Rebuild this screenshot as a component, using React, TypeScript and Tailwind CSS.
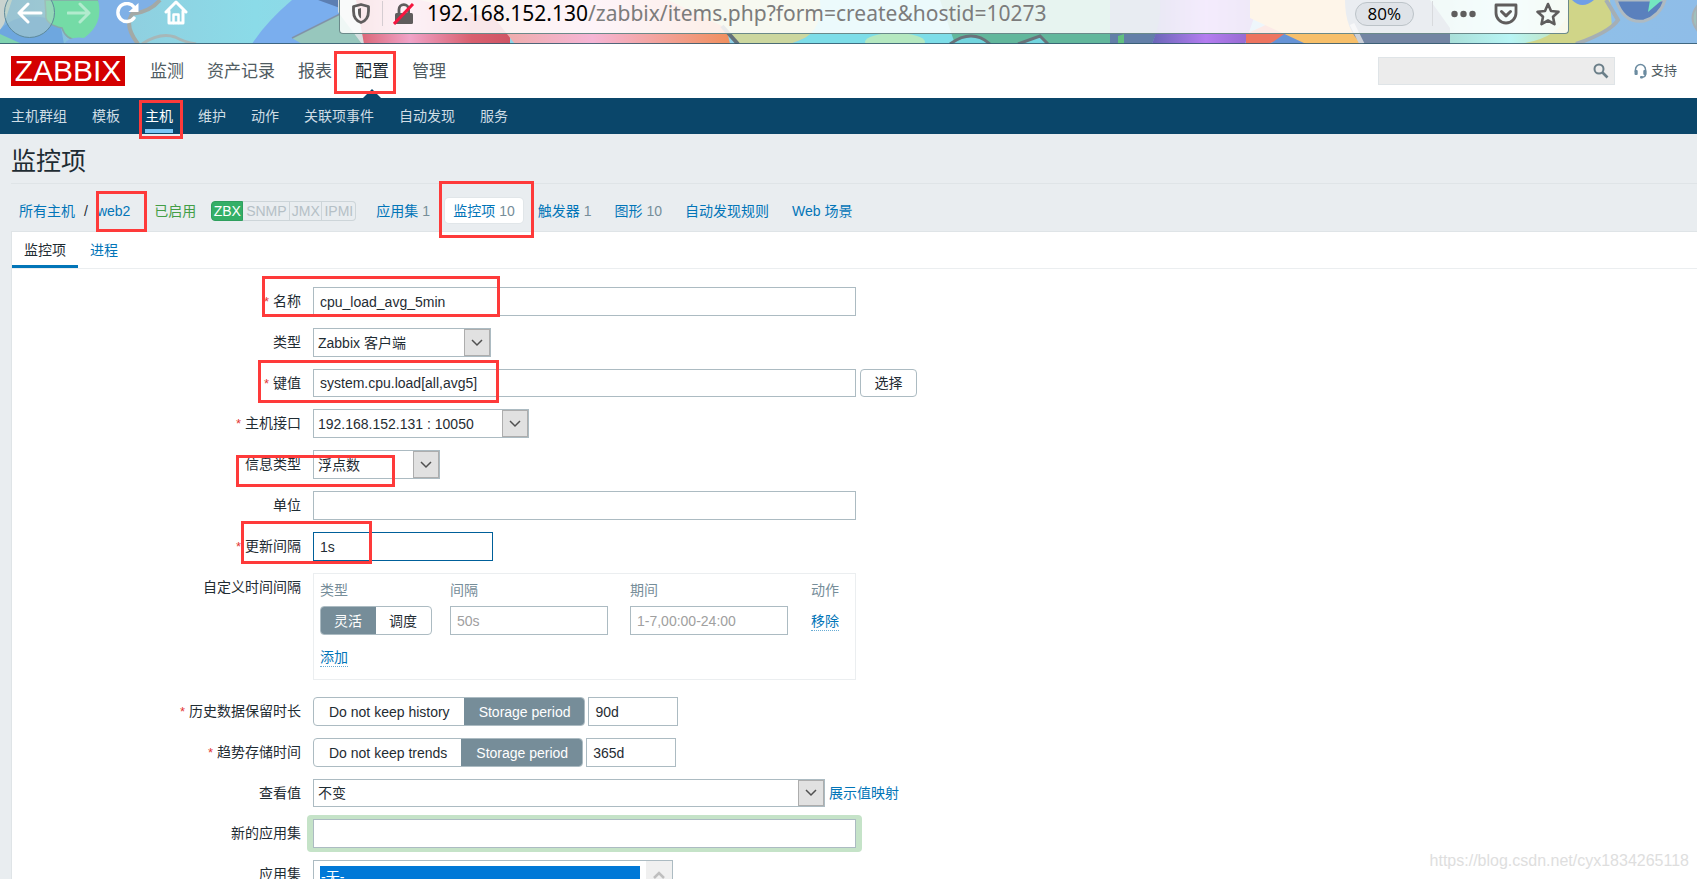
import type { ReactNode } from 'react';
import clsx from 'clsx';

const mainMenu = ['监测', '资产记录', '报表', '配置', '管理'];
const subMenu = ['主机群组', '模板', '主机', '维护', '动作', '关联项事件', '自动发现', '服务'];

const hostTabs = [
  { label: '应用集', count: 1 },
  { label: '监控项', count: 10, selected: true },
  { label: '触发器', count: 1 },
  { label: '图形', count: 10 },
  { label: '自动发现规则' },
  { label: 'Web 场景' },
];

// Red frames drawn over the page to point out the fields to fill in
const highlights = [
  'left-[334px] top-[51px] w-[62px] h-[43px]',
  'left-[139px] top-[100px] w-[44px] h-[39px]',
  'left-[96px] top-[191px] w-[51px] h-[41px]',
  'left-[439px] top-[181px] w-[95px] h-[57px]',
  'left-[262px] top-[276px] w-[238px] h-[41px]',
  'left-[258px] top-[360px] w-[241px] h-[43px]',
  'left-[236px] top-[455px] w-[159px] h-[32px]',
  'left-[241px] top-[521px] w-[131px] h-[43px]',
];

const inputClass =
  'block border border-[#acbbc2] bg-white px-1.5 text-sm text-[#1f2c33] outline-none placeholder:text-[#a0a0a0]';

const ToolbarArt = () => (
  <svg
    className="absolute inset-0 h-full w-full"
    viewBox="0 0 1697 44"
    preserveAspectRatio="none"
    aria-hidden="true"
  >
    <defs>
      <linearGradient id="sky" x1="0" x2="1">
        <stop offset="0" stopColor="#7fb2dd" />
        <stop offset="0.08" stopColor="#8fd0e0" />
        <stop offset="0.15" stopColor="#8bdbe8" />
        <stop offset="0.2" stopColor="#8fd8e6" />
        <stop offset="1" stopColor="#8fbde8" />
      </linearGradient>
      <linearGradient id="rose" x1="0" x2="1">
        <stop offset="0" stopColor="#d9606f" />
        <stop offset="0.35" stopColor="#f0a3c8" />
        <stop offset="0.75" stopColor="#d9606f" />
        <stop offset="1" stopColor="#d05565" />
      </linearGradient>
      <linearGradient id="peach" x1="0" x2="1">
        <stop offset="0" stopColor="#ecaaa0" />
        <stop offset="0.45" stopColor="#f5b5d5" />
        <stop offset="1" stopColor="#f08f5e" />
      </linearGradient>
      <linearGradient id="violet" x1="0" x2="1">
        <stop offset="0" stopColor="#6a66b8" />
        <stop offset="0.5" stopColor="#b47cf0" />
        <stop offset="1" stopColor="#8e66c8" />
      </linearGradient>
      <linearGradient id="aqua" x1="0" x2="1">
        <stop offset="0" stopColor="#a5d8cf" />
        <stop offset="0.5" stopColor="#b8f5f5" />
        <stop offset="1" stopColor="#c5d8a0" />
      </linearGradient>
    </defs>
    <rect width="1697" height="44" fill="url(#sky)" />
    <path d="M0 0H12L4 24L0 30Z" fill="#c9d3cf" />
    <path d="M0 30Q20 8 60 22L64 44H0Z" fill="#6ea7df" />
    <path d="M0 34L22 44H0Z" fill="#7fd3b0" />
    <path d="M45 0H98Q108 10 102 24Q92 40 78 40Q66 40 62 28Q44 24 46 14Z" fill="#74dba6" stroke="#86a8a8" strokeWidth="1.5" />
    <path d="M98 0H160Q150 12 132 14Q124 26 138 44H64Q70 36 84 38Q104 24 98 0Z" fill="#7fb0e6" />
    <path d="M160 0Q150 12 132 14Q124 26 138 44" fill="none" stroke="#a3a9a6" strokeWidth="4" />
    <path d="M142 44Q160 32 175 37Q184 42 196 44" fill="none" stroke="#a7b7b8" strokeWidth="3" />
    <path d="M292 0H345V44H252Q266 22 292 0Z" fill="#7aaeee" />
    <path d="M340 14L292 38L302 44H372L345 8Z" fill="#97c7bd" />
    <path d="M340 14L292 38" stroke="#8293a8" strokeWidth="1.5" />
    <path d="M318 0H340V8Z" fill="#5c7fb2" />
    <path d="M338 0H420L376 44L362 44L338 12Z" fill="#d6dfe0" />
    <path d="M356 0H510V44H364Z" fill="url(#rose)" />
    <path d="M420 0H550L525 44L500 20Z" fill="#eecab4" />
    <path d="M480 0H720L730 44H515Z" fill="url(#peach)" />
    <path d="M668 0H820Q826 20 815 34L790 44H738L722 26Z" fill="#ccd79f" />
    <path d="M722 26L738 44" stroke="#64717a" strokeWidth="4" />
    <path d="M820 0H960V44H790Q824 36 820 0Z" fill="#7ddde8" />
    <ellipse cx="895" cy="42" rx="30" ry="9" fill="#b5e8c0" />
    <path d="M940 0H1120V44H955Z" fill="#62b79c" />
    <path d="M950 44Q972 28 990 44M1018 44L1040 36L1048 44" fill="#72d5de" stroke="#68737a" strokeWidth="3" />
    <path d="M1110 0H1170L1152 44H1110Z" fill="#637fa8" />
    <path d="M1118 36L1124 34V44H1118Z" fill="#62c080" />
    <path d="M1160 0H1260L1245 44H1152Q1162 20 1160 0Z" fill="url(#violet)" />
    <path d="M1246 34L1272 22L1290 36L1268 44H1246Z" fill="#ed7460" />
    <path d="M1270 44L1290 30L1312 44Z" fill="#6693d6" />
    <path d="M1250 0H1350L1362 44H1306L1250 18Z" fill="#f7bf6a" />
    <path d="M1345 0H1455L1450 44H1362Q1345 30 1345 0Z" fill="#7385a3" />
    <path d="M1352 24L1362 44" stroke="#ccd0d8" strokeWidth="5" />
    <path d="M1430 0H1590L1575 44H1450L1450 28Z" fill="url(#aqua)" />
    <path d="M1569 0H1610L1612 28L1576 44H1520Q1560 38 1569 12Z" fill="#d0d588" />
    <path d="M1572 0Q1582 10 1594 0Z" fill="#6f9ee6" />
    <path d="M1576 44Q1610 32 1618 20L1606 0" fill="none" stroke="#a5afb5" strokeWidth="4" />
    <path d="M1616 0H1665Q1660 16 1644 21Q1624 24 1616 0Z" fill="#5a80bd" stroke="#aebac2" strokeWidth="3" />
    <path d="M1650 0H1662L1648 12Z" fill="#74e6c0" />
    <path d="M1697 6Q1688 18 1697 30Z" fill="#9fc2bd" stroke="#a5afb5" strokeWidth="2" />
    <rect y="43" width="1697" height="1" fill="#33596f" opacity="0.85" />
  </svg>
);

const BrowserBar = () => (
  <div className="relative h-11 overflow-hidden">
    <ToolbarArt />
    <div className="relative flex h-[25px] items-center pl-1 text-white">
      <button
        type="button"
        aria-label="后退"
        className="-my-4 flex h-[51px] w-[51px] items-center justify-center rounded-full border border-[#5d8a9c] bg-[#b4d4c8]/50"
      >
        <svg width="26" height="22" viewBox="0 0 26 22" fill="none" stroke="currentColor" strokeWidth="3" strokeLinecap="round" strokeLinejoin="round">
          <path d="M24 11H2M11 2L2 11L11 20" />
        </svg>
      </button>
      <button type="button" aria-label="前进" className="ml-3 opacity-45">
        <svg width="25" height="22" viewBox="0 0 25 22" fill="none" stroke="currentColor" strokeWidth="3" strokeLinecap="round" strokeLinejoin="round">
          <path d="M1 11H22M13 2L22 11L13 20" />
        </svg>
      </button>
      <button type="button" aria-label="刷新" className="ml-6">
        <svg width="24" height="22" viewBox="0 0 24 22" fill="none">
          <path d="M18 16A9 9 0 1 1 18 5" stroke="currentColor" strokeWidth="3.4" strokeLinecap="round" />
          <path d="M22.500 1V10H12.500Z" fill="currentColor" />
        </svg>
      </button>
      <button type="button" aria-label="主页" className="ml-6">
        <svg width="24" height="25" viewBox="0 0 24 25" fill="none" stroke="currentColor" strokeWidth="3" strokeLinecap="round" strokeLinejoin="round">
          <path d="M2 12L12 2L22 12M5 11V23H19V11" />
          <path d="M9.500 23V14.500H14.500V23" strokeWidth="2.500" />
        </svg>
      </button>
      <div className="ml-[151px] mr-32 flex h-[34px] flex-1 items-center self-start rounded-b-sm border border-t-0 border-[#6b8a8a] bg-white/85 pb-1.5 pl-3 pr-2 text-[#5f5d5d]">
        <svg width="18" height="21" viewBox="0 0 18 21" fill="none" aria-hidden="true">
          <path d="M9 1.500L16.500 3.500V8C16.500 14 13.500 18 9 19.500C4.500 18 1.500 14 1.500 8V3.500Z" stroke="currentColor" strokeWidth="2.800" strokeLinejoin="round" />
          <path d="M9 5L6 6V9C6 12 7 14.500 9 15.500Z" fill="currentColor" />
        </svg>
        <span className="ml-3 h-[25px] w-px bg-[#d5cdd2]" />
        <svg className="ml-2.5" width="22" height="22" viewBox="0 0 22 22" fill="none" aria-hidden="true">
          <path d="M6 10V6.500A4.800 4.800 0 0 1 15.600 6.500V10" stroke="currentColor" strokeWidth="2.800" />
          <rect x="2" y="10" width="18" height="11" rx="1.500" fill="currentColor" />
          <path d="M1 21L20 1" stroke="#f5163f" strokeWidth="3" />
        </svg>
        <span className="ml-3 flex-1 whitespace-nowrap font-['Noto_Sans',sans-serif] text-[21px] leading-[27px] text-[#7c7c7c]">
          <span className="text-black">192.168.152.130</span>/zabbix/items.php?form=create&amp;hostid=10273
        </span>
        <span className="rounded-full border border-[#bcc3c8] bg-[#dfe3e8] px-3 font-['Open_Sans',sans-serif] text-[17px] leading-[22px] text-black">
          80%
        </span>
        <span className="ml-[18px] h-[25px] w-px bg-[#d8dadd]" />
        <button type="button" aria-label="更多" className="ml-[18px]">
          <svg width="25" height="8" viewBox="0 0 25 8" fill="currentColor">
            <circle cx="3.500" cy="4" r="3.200" />
            <circle cx="12.500" cy="4" r="3.200" />
            <circle cx="21.500" cy="4" r="3.200" />
          </svg>
        </button>
        <button type="button" aria-label="Pocket" className="ml-[18px]">
          <svg width="24" height="22" viewBox="0 0 24 22" fill="none" stroke="currentColor" strokeWidth="2.800" strokeLinejoin="round" strokeLinecap="round">
            <path d="M2 2H22V10A10 10 0 0 1 2 10Z" />
            <path d="M7.500 8.500L12 12.800L16.500 8.500" strokeWidth="3" />
          </svg>
        </button>
        <button type="button" aria-label="书签" className="ml-[18px]">
          <svg width="24" height="24" viewBox="0 0 24 24" fill="none" stroke="currentColor" strokeWidth="2.600" strokeLinejoin="round">
            <path d="M12 2L15 9L22.500 9.800L17 14.800L18.500 22.200L12 18.500L5.500 22.200L7 14.800L1.500 9.800L9 9Z" />
          </svg>
        </button>
      </div>
    </div>
  </div>
);

const Header = () => (
  <header>
    <div className="flex h-[54px] items-center bg-white pl-[11px] pr-5">
      <a href="#" className="flex h-[30px] w-[114px] items-center justify-center bg-[#d40000] text-[30px] leading-[30px] text-white">
        ZABBIX
      </a>
      <nav className="ml-[25px] flex gap-[23px] self-stretch text-[17px] text-[#505c62]">
        {mainMenu.map((item) => (
          <a
            key={item}
            href="#"
            className={clsx('relative flex items-center pt-0.5', item === '配置' && 'text-[#1f2c33]')}
          >
            {item}
            {item === '配置' && (
              <svg className="absolute bottom-0 left-1/2 -translate-x-1/2" width="18" height="9" viewBox="0 0 18 9" aria-hidden="true">
                <path d="M0 9L9 0L18 9Z" fill="#0a466a" />
              </svg>
            )}
          </a>
        ))}
      </nav>
      <form className="relative ml-auto">
        <input type="text" aria-label="搜索" className="block h-7 w-[237px] border border-[#dfe4e7] bg-[#ececec] pl-2 pr-7 text-sm outline-none" />
        <button type="button" aria-label="搜索" className="absolute right-1.5 top-1.5 text-[#6b7f89]">
          <svg width="16" height="16" viewBox="0 0 16 16" fill="none" stroke="currentColor">
            <circle cx="6" cy="6" r="4.500" strokeWidth="2" />
            <path d="M9.500 9.500L14.500 14.500" strokeWidth="2.600" />
          </svg>
        </button>
      </form>
      <a href="#" className="ml-[19px] flex items-center gap-1 text-[13px] text-[#505c62]">
        <svg width="13" height="16" viewBox="0 0 13 16" fill="none" aria-hidden="true">
          <path d="M1.500 9V6.500A5 5 0 0 1 11.500 6.500V11.500Q11.500 14 7.500 14.500" stroke="#6b8ba0" strokeWidth="1.500" />
          <rect x="0.500" y="7" width="3.200" height="5" rx="1" fill="#6b8ba0" />
          <rect x="9.300" y="7" width="3.200" height="5" rx="1" fill="#6b8ba0" />
          <rect x="6" y="13" width="3" height="2.500" rx="1" fill="#6b8ba0" />
        </svg>
        支持
      </a>
    </div>
    <nav className="flex h-9 gap-[25px] bg-[#0a466a] pl-[11px] text-sm text-[#cfdde5]">
      {subMenu.map((item) => (
        <a
          key={item}
          href="#"
          className={clsx(
            'mb-px flex items-center border-b-4 pt-1',
            item === '主机' ? 'border-[#7cc6f5] text-white' : 'border-transparent',
          )}
        >
          {item}
        </a>
      ))}
    </nav>
  </header>
);

const HostBar = () => (
  <div className="flex h-[47px] items-center pl-2 pt-1.5 text-sm text-[#0275b8]">
    <a href="#">所有主机</a>
    <span className="px-[9px] text-[#1f2c33]">/</span>
    <a href="#">web2</a>
    <span className="ml-6 text-[#429e47]">已启用</span>
    <span className="ml-[15px] flex text-center leading-[18px] text-[#b5c0c6]">
      <span className="w-8 rounded-l-sm border border-[#2f9f5e] bg-[#34af67] text-white">ZBX</span>
      <span className="w-[47px] border border-l-0 border-[#cdd5d9]">SNMP</span>
      <span className="w-8 border border-l-0 border-[#cdd5d9]">JMX</span>
      <span className="w-[34px] rounded-r-sm border border-l-0 border-[#cdd5d9]">IPMI</span>
    </span>
    <div className="ml-3 flex gap-[7px]">
      {hostTabs.map((tab) => (
        <a
          key={tab.label}
          href="#"
          className={clsx(
            'flex h-[25px] items-center gap-1 rounded-sm px-2',
            tab.selected && 'bg-white shadow-[0_0_0_1px_#e1e6e9]',
          )}
        >
          {tab.label}
          {tab.count && <span className="text-[#768d99]">{tab.count}</span>}
        </a>
      ))}
    </div>
  </div>
);

type RowProps = {
  label: string;
  htmlFor?: string;
  required?: boolean;
  children: ReactNode;
};

const Row = ({ label, htmlFor, required, children }: RowProps) => (
  <div className="flex items-start gap-3">
    <label htmlFor={htmlFor} className="w-[289px] shrink-0 text-right leading-7">
      {required && <span className="mr-1 text-[13px] leading-none text-[#e33734]">*</span>}
      {label}
    </label>
    {children}
  </div>
);

type DropdownProps = { id: string; value: string; className: string };

const Dropdown = ({ id, value, className }: DropdownProps) => (
  <div className={clsx('relative border border-[#acbbc2] bg-white', className)}>
    <select id={id} className="block h-full w-full appearance-none bg-transparent pl-1 pr-7 text-sm outline-none">
      <option>{value}</option>
    </select>
    <span className="pointer-events-none absolute inset-y-0 right-0 flex w-[26px] items-center justify-center border border-[#adadad] bg-[#e1e1e1]">
      <svg width="12" height="8" viewBox="0 0 12 8" fill="none" stroke="#505050" strokeWidth="1.500" aria-hidden="true">
        <path d="M1 1L6 6L11 1" />
      </svg>
    </span>
  </div>
);

type SegmentedProps = { name: string; options: string[]; selected: string; padding?: string };

const Segmented = ({ name, options, selected, padding = 'px-[15px]' }: SegmentedProps) => (
  <div className="flex h-[29px] overflow-hidden rounded-sm border border-[#acbbc2]">
    {options.map((option) => (
      <label
        key={option}
        className={clsx(
          'flex items-center has-checked:-m-px has-checked:bg-[#768d99] has-checked:text-white',
          padding,
        )}
      >
        <input type="radio" name={name} defaultChecked={option === selected} className="sr-only" />
        {option}
      </label>
    ))}
  </div>
);

const IntervalTable = () => (
  <div className="mb-[5px] h-[107px] w-[543px] border border-[#ebeef0] pl-1.5 pt-[5px]">
    <table className="w-full table-fixed text-left">
      <thead>
        <tr className="h-[22px] leading-[22px] text-[#768d99]">
          <th className="w-[130px] font-normal">类型</th>
          <th className="w-[180px] font-normal">间隔</th>
          <th className="w-[181px] font-normal">期间</th>
          <th className="font-normal">动作</th>
        </tr>
      </thead>
      <tbody>
        <tr className="h-[39px]">
          <td>
            <div className="flex">
              <Segmented name="interval-type" options={['灵活', '调度']} selected="灵活" padding="px-[14px]" />
            </div>
          </td>
          <td>
            <input type="text" aria-label="间隔" placeholder="50s" className={clsx(inputClass, 'h-[29px] w-[158px]')} />
          </td>
          <td>
            <input type="text" aria-label="期间" placeholder="1-7,00:00-24:00" className={clsx(inputClass, 'h-[29px] w-[158px]')} />
          </td>
          <td>
            <button type="button" className="border-b border-dotted border-[#0275b8]/60 leading-[18px] text-[#0275b8]">
              移除
            </button>
          </td>
        </tr>
        <tr className="h-[34px]">
          <td colSpan={4}>
            <button type="button" className="border-b border-dotted border-[#0275b8]/60 leading-[18px] text-[#0275b8]">
              添加
            </button>
          </td>
        </tr>
      </tbody>
    </table>
  </div>
);

const ItemForm = () => (
  <form className="flex flex-col gap-3 pt-[18px]">
    <Row label="名称" htmlFor="name" required>
      <input id="name" type="text" defaultValue="cpu_load_avg_5min" className={clsx(inputClass, 'h-[29px] w-[543px]')} />
    </Row>
    <Row label="类型" htmlFor="type">
      <Dropdown id="type" value="Zabbix 客户端" className="h-[29px] w-[178px]" />
    </Row>
    <Row label="键值" htmlFor="key" required>
      <div className="flex gap-1">
        <input id="key" type="text" defaultValue="system.cpu.load[all,avg5]" className={clsx(inputClass, 'h-7 w-[543px]')} />
        <button type="button" className="h-7 w-[57px] rounded-sm border border-[#acbbc2] bg-white">
          选择
        </button>
      </div>
    </Row>
    <Row label="主机接口" htmlFor="interface" required>
      <Dropdown id="interface" value="192.168.152.131 : 10050" className="h-[29px] w-[216px]" />
    </Row>
    <Row label="信息类型" htmlFor="value-type">
      <Dropdown id="value-type" value="浮点数" className="h-[29px] w-[127px]" />
    </Row>
    <Row label="单位" htmlFor="units">
      <input id="units" type="text" className={clsx(inputClass, 'h-[29px] w-[543px]')} />
    </Row>
    <Row label="更新间隔" htmlFor="delay" required>
      <input
        id="delay"
        type="text"
        defaultValue="1s"
        className="block h-[29px] w-[180px] border border-[#00609a] bg-white px-1.5 text-sm outline-none"
      />
    </Row>
    <Row label="自定义时间间隔">
      <IntervalTable />
    </Row>
    <Row label="历史数据保留时长" htmlFor="history" required>
      <div className="flex gap-[3px]">
        <Segmented name="history-mode" options={['Do not keep history', 'Storage period']} selected="Storage period" />
        <input id="history" type="text" defaultValue="90d" className={clsx(inputClass, 'h-[29px] w-[90px]')} />
      </div>
    </Row>
    <Row label="趋势存储时间" htmlFor="trends" required>
      <div className="flex gap-[3px]">
        <Segmented name="trends-mode" options={['Do not keep trends', 'Storage period']} selected="Storage period" />
        <input id="trends" type="text" defaultValue="365d" className={clsx(inputClass, 'h-[29px] w-[90px]')} />
      </div>
    </Row>
    <Row label="查看值" htmlFor="valuemap">
      <div className="flex items-center gap-1">
        <Dropdown id="valuemap" value="不变" className="h-7 w-[512px]" />
        <a href="#" className="text-[#0275b8]">展示值映射</a>
      </div>
    </Row>
    <Row label="新的应用集" htmlFor="new-application">
      <div className="-mx-1.5 -my-1 rounded-sm bg-[#c5e3c8] px-1.5 py-1">
        <input id="new-application" type="text" className={clsx(inputClass, 'h-[29px] w-[543px]')} />
      </div>
    </Row>
    <Row label="应用集" htmlFor="applications">
      <div className="flex h-[114px] w-[360px] border border-[#acbbc2] bg-white">
        <select
          id="applications"
          multiple
          defaultValue={['0']}
          className="min-w-0 flex-1 overflow-hidden px-1.5 py-[5px] text-sm leading-4 outline-none"
        >
          <option value="0" className="p-0 pl-px checked:bg-[linear-gradient(#0078d7,#0078d7)] checked:text-white">
            -无-
          </option>
        </select>
        <span className="flex w-[26px] justify-center bg-[#f0f0f0] pt-2.5">
          <svg width="12" height="8" viewBox="0 0 12 8" fill="none" stroke="#bfbfbf" strokeWidth="2.500" aria-hidden="true">
            <path d="M1 7L6 2L11 7" />
          </svg>
        </span>
      </div>
    </Row>
  </form>
);

const App = () => {
  return (
    <div className="relative h-screen overflow-hidden bg-[#e9edf0] font-['Liberation_Sans','Noto_Sans_CJK_SC',sans-serif] text-sm text-[#1f2c33]">
      <BrowserBar />
      <Header />
      <main className="pl-[11px]">
        <h1 className="h-[50px] border-b border-[#dfe4e7] pt-[9px] text-[25px] leading-9">监控项</h1>
        <HostBar />
        <section className="border-l border-t border-[#dfe4e7] bg-white">
          <div className="flex h-[37px] border-b border-[#ebeef0]">
            <a href="#" className="flex items-center border-b-[3px] border-[#0275b8] px-3 pt-[3px]">
              监控项
            </a>
            <a href="#" className="flex items-center border-b-[3px] border-transparent px-3 pt-[3px] text-[#0275b8]">
              进程
            </a>
          </div>
          <ItemForm />
        </section>
      </main>
      {highlights.map((box) => (
        <div key={box} className={clsx('pointer-events-none absolute border-[3px] border-[#fe3a3a]', box)} />
      ))}
      <p className="pointer-events-none absolute bottom-1.5 right-2 text-base text-[#dedede]">
        https://blog.csdn.net/cyx1834265118
      </p>
    </div>
  );
};

export default App;
